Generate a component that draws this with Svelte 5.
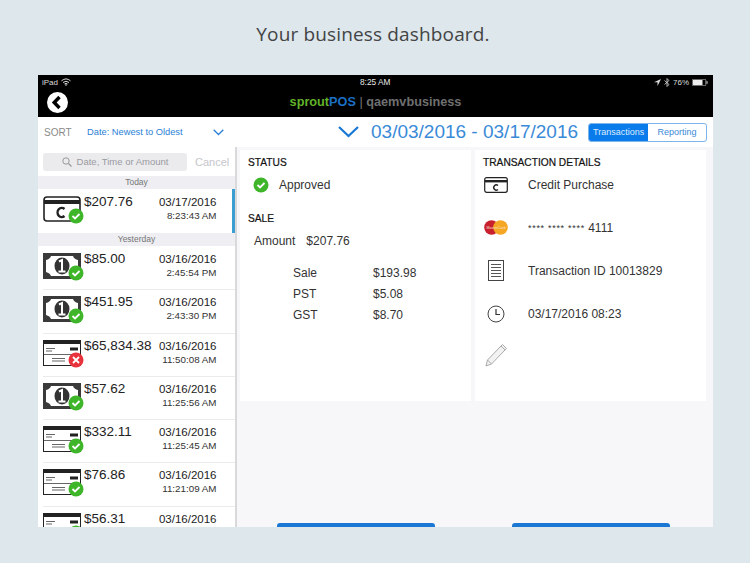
<script>
  const rows = [
    { icon: 'cash', amount: '$85.00', date: '03/16/2016', time: '2:45:54 PM', ok: true },
    { icon: 'cash', amount: '$451.95', date: '03/16/2016', time: '2:43:30 PM', ok: true },
    { icon: 'check', amount: '$65,834.38', date: '03/16/2016', time: '11:50:08 AM', ok: false },
    { icon: 'cash', amount: '$57.62', date: '03/16/2016', time: '11:25:56 AM', ok: true },
    { icon: 'check', amount: '$332.11', date: '03/16/2016', time: '11:25:45 AM', ok: true },
    { icon: 'check', amount: '$76.86', date: '03/16/2016', time: '11:21:09 AM', ok: true },
    { icon: 'check', amount: '$56.31', date: '03/16/2016', time: '', ok: true }
  ];
</script>

{#snippet badge(ok)}
  {#if ok}
    <circle cx="33" cy="20" r="7.5" fill="#3fb52a" />
    <path d="M29.5 20 l2.5 2.5 l4.5 -4.5" fill="none" stroke="#fff" stroke-width="1.8" />
  {:else}
    <circle cx="33" cy="20" r="7.5" fill="#e8323c" />
    <path d="M30 17 l6 6 M36 17 l-6 6" fill="none" stroke="#fff" stroke-width="1.8" />
  {/if}
{/snippet}

{#snippet txIcon(kind, ok)}
  <svg class="txicon" width="42" height="28" viewBox="0 0 42 28">
    {#if kind === 'cash'}
      <rect x="0" y="0" width="38" height="26" fill="#3a3a3a" />
      <path d="M8 3 H30 Q31 6 35 7 V19 Q31 20 30 23 H8 Q7 20 3 19 V7 Q7 6 8 3Z" fill="#fff" />
      <ellipse cx="19" cy="13" rx="7.500" ry="8.500" fill="#333" />
      <path d="M16 8.500 L19 7 V18 M15.500 18.500 H22.500" fill="none" stroke="#fff" stroke-width="2" />
    {:else if kind === 'check'}
      <rect x="0.500" y="0.500" width="37" height="25" fill="#fff" stroke="#222" />
      <rect x="0" y="0" width="38" height="4" fill="#222" />
      <path d="M3 8.500 H12 M3 11 H9 M1 14.500 H37 M9 18.500 H22 M9 21 H22" stroke="#666" stroke-width="1.200" />
      <rect x="27" y="7.500" width="8" height="3" fill="#222" />
    {:else}
      <rect x="1" y="1" width="36" height="24" rx="3" fill="#fff" stroke="#222" stroke-width="1.600" />
      <rect x="1" y="4" width="36" height="4" fill="#222" />
      <path d="M21.500 13 A4.200 4.600 0 1 0 21.500 20" fill="none" stroke="#222" stroke-width="2.400" />
    {/if}
    {@render badge(ok)}
  </svg>
{/snippet}

<div class="page">
  <h1>Your business dashboard.</h1>
  <div class="tablet">
    <div class="black">
      <div class="status">
        <div class="st-left">
          <span>iPad</span>
          <svg width="10" height="8" viewBox="0 0 10 8"><path d="M0.500 2.800 Q5 -1 9.500 2.800 M2 4.500 Q5 2 8 4.500 M3.500 6 Q5 4.800 6.500 6" fill="none" stroke="#ddd" stroke-width="1" /><circle cx="5" cy="7" r="0.800" fill="#ddd" /></svg>
        </div>
        <span class="st-time">8:25 AM</span>
        <div class="st-right">
          <svg width="7" height="7" viewBox="0 0 7 7"><path d="M7 0 L0 3.200 H3.500 V7Z" fill="#ddd" /></svg>
          <svg width="6" height="9" viewBox="0 0 6 9"><path d="M0.500 2.500 L5 6.500 L3 8.500 V0.500 L5 2.500 L0.500 6.500" fill="none" stroke="#ddd" stroke-width="0.800" /></svg>
          <span>76%</span>
          <svg width="16" height="7" viewBox="0 0 16 7"><rect x="0.300" y="0.300" width="13.500" height="6.400" rx="1" fill="none" stroke="#ddd" stroke-width="0.600" /><rect x="1" y="1" width="9.500" height="5" fill="#eee" /><rect x="14.400" y="2.200" width="1.200" height="2.600" fill="#bbb" /></svg>
        </div>
      </div>
      <div class="nav">
        <svg class="back" width="21" height="21" viewBox="0 0 21 21"><circle cx="10.500" cy="10.500" r="10.500" fill="#fff" /><path d="M12.500 5 L7.200 10.500 L12.500 16" fill="none" stroke="#000" stroke-width="3.400" /></svg>
        <div class="brand"><span class="g">sprout</span><span class="b">POS</span><span class="sep">&nbsp;|&nbsp;</span><span class="q">qaemvbusiness</span></div>
      </div>
    </div>

    <div class="toolbar">
      <div class="sort">
        <span class="sort-label">SORT</span>
        <span class="sort-val">Date: Newest to Oldest</span>
        <svg width="11" height="7" viewBox="0 0 11 7"><path d="M0.700 0.700 L5.500 5.500 L10.300 0.700" fill="none" stroke="#2b7fd6" stroke-width="1.300" /></svg>
      </div>
      <div class="range">
        <svg width="21" height="12" viewBox="0 0 21 12"><path d="M1 1 L10.500 10 L20 1" fill="none" stroke="#1a78d4" stroke-width="2.200" /></svg>
        <span class="dates">03/03/2016 - 03/17/2016</span>
        <div class="seg"><span class="on">Transactions</span><span>Reporting</span></div>
      </div>
    </div>

    <div class="body">
      <aside>
        <div class="searchbar">
          <div class="search">
            <svg width="10" height="10" viewBox="0 0 10 10"><circle cx="4" cy="4" r="3.200" fill="none" stroke="#999" stroke-width="1" /><path d="M6.500 6.500 L9.500 9.500" stroke="#999" stroke-width="1.200" /></svg>
            <span>Date, Time or Amount</span>
          </div>
          <span class="cancel">Cancel</span>
        </div>
        <div class="head">Today</div>
        <div class="row selected">
          {@render txIcon('credit', true)}
          <span class="amt">$207.76</span>
          <div class="when"><div class="d">03/17/2016</div><div class="t">8:23:43 AM</div></div>
        </div>
        <div class="head">Yesterday</div>
        {#each rows as r}
          <div class="row">
            {@render txIcon(r.icon, r.ok)}
            <span class="amt">{r.amount}</span>
            <div class="when"><div class="d">{r.date}</div>{#if r.time}<div class="t">{r.time}</div>{/if}</div>
          </div>
        {/each}
      </aside>

      <main>
        <div class="panels">
          <section>
            <h2>STATUS</h2>
            <div class="approved">
              <svg width="16" height="16" viewBox="0 0 16 16"><circle cx="8" cy="8" r="7.500" fill="#3fb52a" /><path d="M4.500 8 L7 10.500 L11.500 6" fill="none" stroke="#fff" stroke-width="1.800" /></svg>
              <span>Approved</span>
            </div>
            <h2 class="sale">SALE</h2>
            <div class="amount"><span>Amount</span><span>$207.76</span></div>
            <div class="lines">
              <span>Sale</span><span>$193.98</span>
              <span>PST</span><span>$5.08</span>
              <span>GST</span><span>$8.70</span>
            </div>
          </section>
          <section>
            <h2>TRANSACTION DETAILS</h2>
            <div class="detail first">
              <svg class="di" width="24" height="16" viewBox="0 0 24 16"><rect x="0.700" y="0.700" width="22.600" height="14.600" rx="2" fill="#fff" stroke="#222" stroke-width="1.200" /><rect x="1" y="3" width="22" height="2.400" fill="#222" /><path d="M14 8.500 A2.600 2.600 0 1 0 14 12.500" fill="none" stroke="#222" stroke-width="1.400" /></svg>
              <span>Credit Purchase</span>
            </div>
            <div class="detail">
              <svg class="di" width="24" height="15" viewBox="0 0 24 15"><circle cx="7.500" cy="7.500" r="7.300" fill="#c8202c" /><circle cx="16.500" cy="7.500" r="7.300" fill="#f5a623" /><text x="12" y="8.800" text-anchor="middle" font-size="3.600" fill="#fbe3d0" font-family="Liberation Sans, sans-serif">MasterCard</text></svg>
              <span><span class="stars">**** **** ****</span> 4111</span>
            </div>
            <div class="detail">
              <svg class="di" width="24" height="21" viewBox="0 0 24 21"><rect x="4.500" y="0.500" width="15" height="20" fill="#fff" stroke="#444" /><path d="M7 4.500 H17 M7 7.500 H17 M7 10.500 H17 M7 13.500 H17 M7 16.500 H17" stroke="#555" stroke-width="1" /></svg>
              <span>Transaction ID 10013829</span>
            </div>
            <div class="detail">
              <svg class="di" width="24" height="18" viewBox="0 0 24 18"><circle cx="12" cy="9" r="8" fill="none" stroke="#444" stroke-width="1" /><path d="M12 4 V9.500 H16" fill="none" stroke="#333" stroke-width="1.200" /></svg>
              <span>03/17/2016 08:23</span>
            </div>
            <div class="detail pencil">
              <svg class="di" width="24" height="24" viewBox="0 0 24 24"><path d="M2 23 L3.500 17 L17 3 L21 7 L7.500 21Z M17 3 L18.500 1.500 L22.500 5.500 L21 7 M3.500 17 L7.500 21" fill="#f2f2f2" stroke="#aaa" stroke-width="1" /></svg>
            </div>
          </section>
        </div>
        <div class="actions"><span></span><span></span></div>
      </main>
    </div>
  </div>
</div>

<style>
  :global(body) { margin: 0; background: #dde7ec; }
  .page {
    width: 750px; height: 563px; overflow: hidden; box-sizing: border-box;
    display: flex; flex-direction: column; align-items: center;
    font-family: "Liberation Sans", Arial, sans-serif; color: #222;
  }
  h1 {
    margin: 0 4px 0 0; height: 75px; box-sizing: border-box; padding-top: 21px;
    font: 400 19px/26px "Open Sans", sans-serif; color: #444; letter-spacing: 0.150px;
  }
  .tablet { width: 675px; height: 452px; margin-right: 0; align-self: flex-start; margin-left: 38px; background: #f7f7f9; display: flex; flex-direction: column; overflow: hidden; }
  .black { background: #000; height: 42px; flex: none; color: #ddd; }
  .status { position: relative; display: flex; justify-content: space-between; align-items: center; height: 14px; padding: 0 5px 0 4px; font-size: 8px; }
  .st-left, .st-right { display: flex; align-items: center; gap: 3px; }
  .st-time { position: absolute; left: 322px; top: 2px; line-height: 10px; color: #e8e8e8; font-size: 8.300px; }
  .nav { position: relative; height: 28px; display: flex; align-items: center; justify-content: center; }
  .back { position: absolute; left: 9px; top: 3px; }
  .brand { font-size: 12.700px; font-weight: 700; margin-top: -2px; white-space: nowrap; }
  .g { color: #62b32a; } .b { color: #1b6fc4; } .sep { color: #777; font-weight: 400; } .q { color: #6f6f6f; }

  .toolbar { height: 30px; background: #fff; display: flex; flex: none; align-items: center; }
  .sort { width: 197px; display: flex; align-items: center; padding-left: 6px; box-sizing: border-box; font-size: 9.300px; }
  .sort-label { color: #8a8a8a; width: 43px; font-size: 10px; }
  .sort-val { color: #2b7fd6; width: 126px; }
  .range { flex: 1; display: flex; align-items: center; padding-left: 103px; }
  .dates { color: #3a8ad8; font-size: 19px; margin-left: 12px; white-space: nowrap; }
  .seg { display: flex; margin-left: 10px; width: 119px; height: 19px; box-sizing: border-box; border: 1px solid #7db5ea; border-radius: 3px; overflow: hidden; font-size: 9px; line-height: 17px; text-align: center; color: #3a8ad8; }
  .seg span { width: 59px; }
  .seg .on { background: #0a7bea; color: #dcecff; }
  .seg span + span { flex: 1; }

  .body { flex: 1; display: flex; min-height: 0; }
  aside { width: 199px; box-sizing: border-box; background: #fff; border-right: 2px solid #d9d9dc; flex: none; overflow: hidden; }
  .searchbar { height: 29px; display: flex; align-items: center; background: #fff; }
  .search { margin-left: 5px; width: 144px; height: 18px; background: #ebebee; border-radius: 3px; display: flex; align-items: center; justify-content: center; gap: 5px; font-size: 9.500px; color: #9a9a9f; }
  .cancel { margin-left: 8px; font-size: 11px; color: #c6c6ca; }
  .head { height: 13px; background: #eeeef3; text-align: center; font-size: 8.500px; line-height: 13px; color: #777; }
  .row { position: relative; height: 43.300px; box-sizing: border-box; padding: 5px 0 0 5px; display: flex; background: #fff; }
  .row + .row::before { content: ""; position: absolute; left: 5px; right: 0; top: 0; height: 1px; background: #ebebeb; }
  .selected { border-right: 3px solid #3a9fd0; height: 44px; }
  .txicon { flex: none; margin-top: 2px; }
  .amt { position: absolute; left: 46px; top: 5px; font-size: 13.500px; line-height: 16px; color: #222; }
  .when { position: absolute; right: 18.500px; top: 6px; text-align: right; }
  .selected .when { right: 15.500px; }
  .d { font-size: 11.500px; line-height: 14px; color: #222; }
  .t { font-size: 9.800px; line-height: 13px; color: #333; }

  main { flex: 1; padding: 3px 6px 0 3px; display: flex; flex-direction: column; }
  .panels { display: grid; grid-template-columns: 231px 231px; gap: 4px; height: 251px; flex: none; }
  section { background: #fff; padding: 7px 8px; box-sizing: border-box; }
  h2 { margin: 0; font-size: 10.200px; line-height: 12px; font-weight: 400; color: #111; -webkit-text-stroke: 0.200px #111; }
  .approved { display: flex; align-items: center; gap: 10px; margin: 8px 0 0 5px; height: 16px; font-size: 12px; color: #333; }
  .sale { margin-top: 20px; }
  .amount { display: flex; gap: 11px; margin: 9px 0 0 6px; font-size: 12px; line-height: 14px; color: #333; }
  .lines { display: grid; grid-template-columns: 80px auto; row-gap: 7px; margin: 18px 0 0 45px; justify-content: start; font-size: 12px; line-height: 14px; color: #333; }
  .detail { height: 43px; display: flex; align-items: center; gap: 20px; font-size: 12px; color: #333; padding-left: 1px; }
  .detail.first { height: 31px; margin-bottom: 6px; }
  .detail.pencil { margin-top: -2px; }
  .di { flex: none; }
  .stars { font-size: 9px; letter-spacing: 0.700px; vertical-align: 1px; }
  .actions { margin-top: auto; display: flex; gap: 77px; padding-left: 37px; }
  .actions span { width: 158px; height: 4px; background: #1a78d4; border-radius: 3px 3px 0 0; }
</style>
